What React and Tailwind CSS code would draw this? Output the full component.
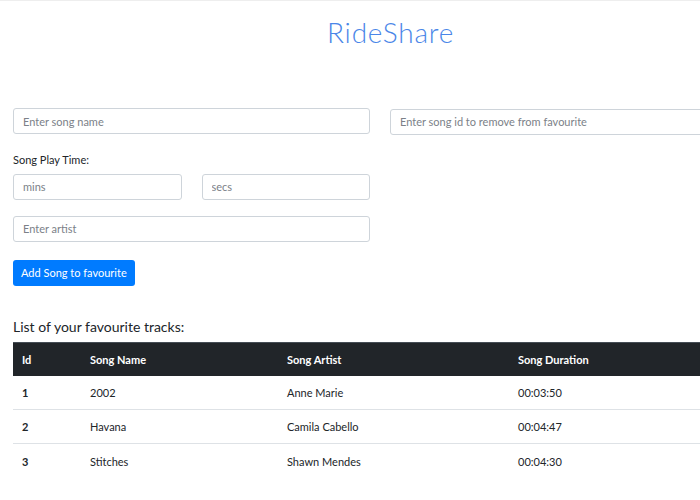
const songs = [
  { id: 1, name: "2002", artist: "Anne Marie", duration: "00:03:50" },
  { id: 2, name: "Havana", artist: "Camila Cabello", duration: "00:04:47" },
  { id: 3, name: "Stitches", artist: "Shawn Mendes", duration: "00:04:30" },
];

const inputCls =
  "h-[26px] w-full rounded-[3px] border border-[#ced4da] bg-white px-[9px] text-[11px] text-[#495057] placeholder:text-[#7b8188] outline-none";

const App = () => {
  return (
    <div
      className="h-[500px] w-[700px] overflow-hidden bg-white border-t border-[#eeeeee]"
      style={{ fontFamily: "Lato, 'Noto Sans', sans-serif" }}
    >
      <div className="w-[780px]">
        <div className="flex h-[61px] items-center pl-[327px]">
          <h1 className="text-[28px] font-light tracking-[0.8px] text-[#4a86e8]">
            RideShare
          </h1>
        </div>

        <div className="mt-[46px] flex gap-[20px] px-[13px]">
          <div className="flex w-[357px] flex-col">
            <input className={inputCls} placeholder="Enter song name" />
            <label className="mt-[18px] text-[11px] text-[#212529]">Song Play Time:</label>
            <div className="mt-[5px] flex gap-[20px]">
              <input className={inputCls} placeholder="mins" />
              <input className={inputCls} placeholder="secs" />
            </div>
            <input className={inputCls + " mt-[16px]"} placeholder="Enter artist" />
            <div className="mt-[17px]">
              <button className="h-[26px] rounded-[3px] bg-[#007bff] px-[8px] text-[11px] text-white">
                Add Song to favourite
              </button>
            </div>
          </div>
          <div className="w-[357px]">
            <input className={inputCls} placeholder="Enter song id to remove from favourite" />
          </div>
        </div>

        <h2 className="mt-[30px] px-[13px] text-[14px] text-[#212529]">List of your favourite tracks:</h2>

        <div className="mx-[13px] mt-[5px] text-[11px] text-[#212529]">
          <div className="grid h-[34px] grid-cols-[77px_197px_231px_1fr] items-center bg-[#212529] font-bold text-white border-t border-[#454d55]">
            <div className="pl-[9px] pt-[1px]">Id</div>
            <div className="pt-[1px]">Song Name</div>
            <div className="pt-[1px]">Song Artist</div>
            <div className="pt-[1px]">Song Duration</div>
          </div>
          {songs.map((s, i) => (
            <div
              key={s.id}
              className={`grid h-[34px] grid-cols-[77px_197px_231px_1fr] items-center pt-[2px] ${
                i < songs.length - 1 ? "border-b border-[#dee2e6]" : ""
              }`}
            >
              <div className="pl-[9px] font-bold">{s.id}</div>
              <div>{s.name}</div>
              <div>{s.artist}</div>
              <div>{s.duration}</div>
            </div>
          ))}
        </div>
      </div>
    </div>
  );
};

export default App;
